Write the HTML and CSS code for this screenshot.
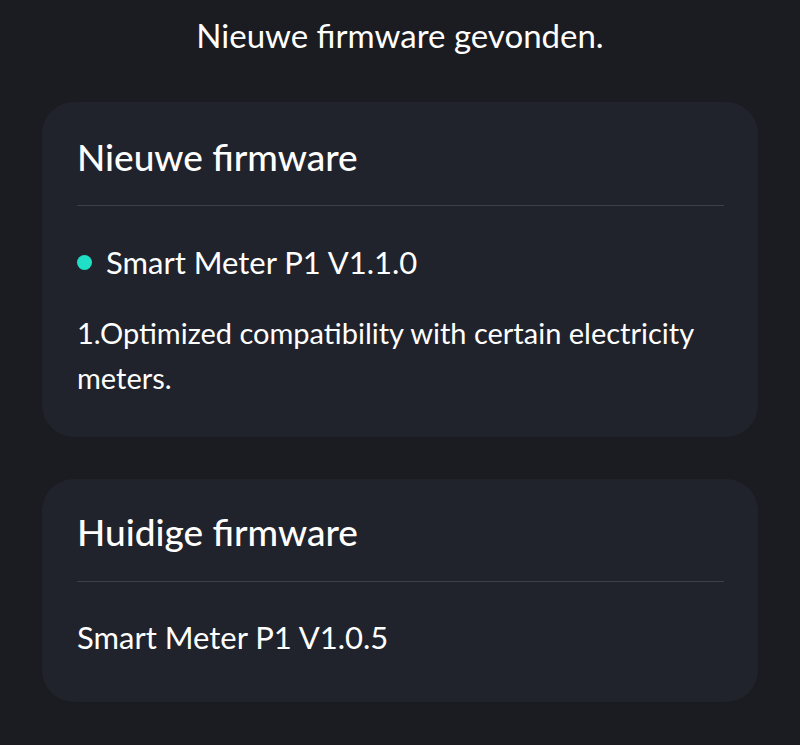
FILE: index.html
```html
<!DOCTYPE html>
<html lang="nl">
<head>
  <meta charset="UTF-8">
  <title>Firmware</title>
  <link rel="stylesheet" href="styles.css">
</head>
<body>
<div class="page">
  <h1 class="melding">Nieuwe firmware gevonden.</h1>

  <div class="kaart nieuw">
    <h2>Nieuwe firmware</h2>
    <div class="lijn"></div>
    <div class="versie">
      <span class="stip"></span>
      <span>Smart Meter P1 V1.1.0</span>
    </div>
    <p class="notities">1.Optimized compatibility with certain electricity meters.</p>
  </div>

  <div class="kaart huidig">
    <h2>Huidige firmware</h2>
    <div class="lijn"></div>
    <div class="huidig-versie">Smart Meter P1 V1.0.5</div>
  </div>
</div>
</body>
</html>
```

FILE: styles.css
```css
body {
  margin: 0;
  background-color: #1b1c21;
  color: #ffffff;
  font-family: Lato, "Noto Sans", sans-serif;
}
.page {
  padding: 15px 42px 0 42px;
}
.melding {
  margin: 0;
  text-align: center;
  font-size: 33px;
  font-weight: normal;
  line-height: 40px;
}
.kaart {
  background: #20232c;
  border-radius: 32px;
  padding: 0 34px 0 35px;
}
.nieuw {
  margin-top: 47px;
  padding-top: 35px;
  padding-bottom: 37px;
}
.huidig {
  margin-top: 42px;
  padding-top: 33px;
  padding-bottom: 45px;
}
h2 {
  margin: 0;
  font-size: 37px;
  font-weight: 500;
  line-height: 40px;
}
.lijn {
  height: 1px;
  background: #3d4049;
}
.nieuw .lijn {
  margin-top: 28px;
}
.huidig .lijn {
  margin-top: 29px;
}
.versie {
  display: flex;
  align-items: center;
  gap: 14px;
  margin-top: 36px;
  font-size: 31px;
  line-height: 40px;
}
.stip {
  flex: none;
  width: 15px;
  height: 15px;
  border-radius: 50%;
  background: #1fe0c6;
}
.notities {
  margin: 28px 0 0 0;
  font-size: 29px;
  line-height: 45px;
}
.huidig-versie {
  margin-top: 35px;
  font-size: 31px;
  line-height: 40px;
}
```
